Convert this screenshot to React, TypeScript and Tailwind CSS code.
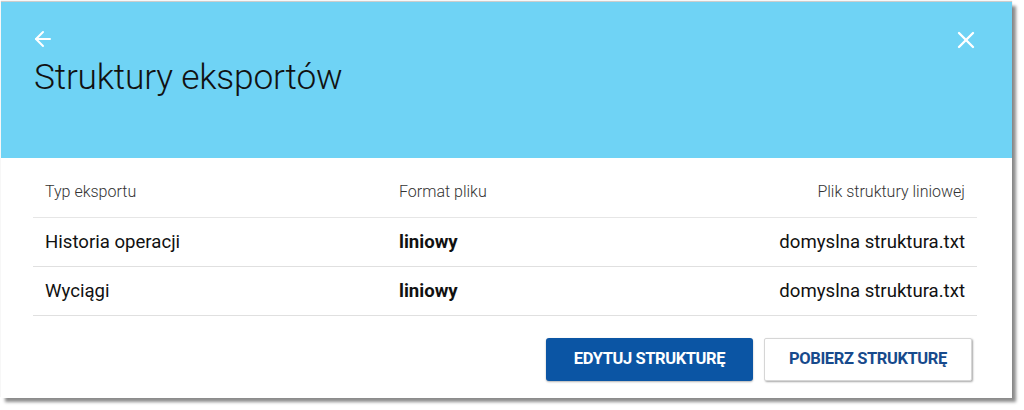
import { ArrowLeft, X } from 'lucide-react';

const rows = [
    { type: 'Historia operacji', format: 'liniowy', file: 'domyslna struktura.txt' },
    { type: 'Wyciągi', format: 'liniowy', file: 'domyslna struktura.txt' },
];

export default function App() {
    return (
        <div className="w-[1024px] h-[410px] bg-white pt-[2px] pl-[1px] font-['Roboto',sans-serif]">
            <div className="w-[1011px] h-[396px] bg-white shadow-[4px_4px_3px_rgba(0,0,0,0.45),0_-1px_1px_rgba(0,0,0,0.2)] flex flex-col">
                {/* header */}
                <div className="h-[156px] bg-[#6fd3f5] px-[30px] pt-[25px] relative">
                    <button className="text-white block">
                        <ArrowLeft size={24} strokeWidth={2} />
                    </button>
                    <h1 className="mt-[4px] ml-[3px] text-[35.3px] leading-[44px] font-light text-[#111] tracking-[-0.2px]">Struktury eksportów</h1>
                    <button className="absolute right-[32px] top-[24px] text-white">
                        <X size={28} strokeWidth={2} />
                    </button>
                </div>

                {/* table */}
                <div className="ml-[32px] mr-[35px] mt-[14px]">
                    <div className="grid grid-cols-[354px_1fr_1fr] h-[46px] items-center pl-[12px] pr-[12px] pb-[6px] border-b border-[#e6e6e6] text-[16px] font-light text-[#333]">
                        <div>Typ eksportu</div>
                        <div>Format pliku</div>
                        <div className="text-right">Plik struktury liniowej</div>
                    </div>
                    {rows.map((row) => (
                        <div key={row.type} className="grid grid-cols-[354px_1fr_1fr] h-[49px] items-center pl-[12px] pr-[12px] pt-[2px] border-b border-[#e0e0e0] text-[18.6px] text-[#111]">
                            <div>{row.type}</div>
                            <div className="font-bold">{row.format}</div>
                            <div className="text-right">{row.file}</div>
                        </div>
                    ))}
                </div>

                {/* actions */}
                <div className="flex justify-end gap-[11px] mt-[22px] pr-[40px]">
                    <button className="w-[207px] h-[43px] rounded-[3px] bg-[#0b55a4] text-white text-[16.5px] font-bold uppercase shadow-[0_1px_2px_rgba(0,0,0,0.3)] tracking-[-0.4px]">
                        Edytuj strukturę
                    </button>
                    <button className="w-[208px] h-[43px] rounded-[2px] bg-white text-[#174a8c] text-[16.5px] font-bold uppercase border border-[#d6d6d6] shadow-[1px_1px_2px_rgba(0,0,0,0.35)] tracking-[-0.4px]">
                        Pobierz strukturę
                    </button>
                </div>
            </div>
        </div>
    );
}
